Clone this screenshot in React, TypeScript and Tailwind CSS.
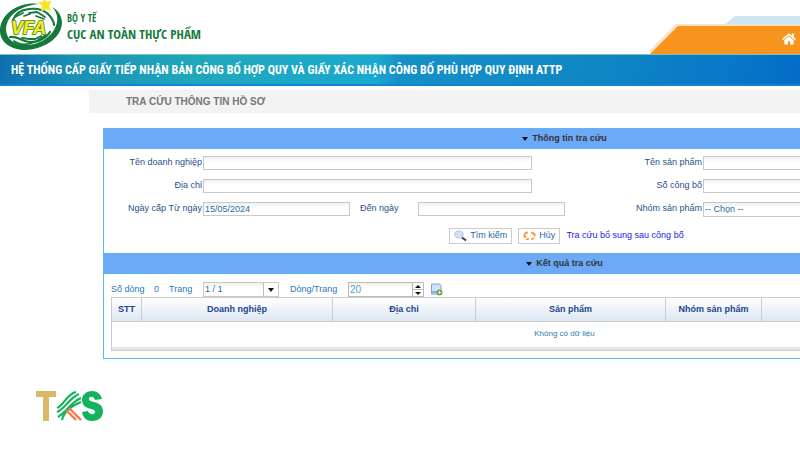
import type { ReactNode } from "react";
import { FaHome } from "react-icons/fa";

const inputClass =
    "border border-[#c9c9c9] bg-linear-to-b from-[#f0f0f0] to-white to-40% px-px text-[9px] text-[#1e6ba8] outline-none";

const buttonClass = "flex h-4 items-center gap-[3px] border border-[#ccc] px-1 text-[#1e6ba8]";

function VfaLogo() {
    return (
        <svg width="62" height="52" viewBox="0 0 62 52" aria-label="VFA">
            <path
                d="M40 4C22 1 2 11 0 29c-1 13 11 21 25 21 20-1 36-12 37-27 0-7-4-13-10-16 4 4 6 9 5 15-2 12-15 23-31 23C14 45 6 39 6 29 7 14 22 5 40 4Z"
                fill="#16793c"
            />
            <g fill="none" stroke="#16793c" strokeLinecap="round">
                <path d="M13 20c2-6 8-10 16-11 9-1 15 1 19 5 4 4 6 7 6 11" strokeWidth="2.2" />
                <path d="M15 17l8-4M29 13l8-1 8 5M24 16l6-2M36 16l8 3" strokeWidth="1.8" />
                <path d="M10 37c6-1 9 2 15 4 9 3 20-1 25-9" strokeWidth="2.2" />
                <path d="M14 41c5 4 13 4 21 1M22 38l7 1h6l6-3M38 40l8-5" strokeWidth="1.8" />
            </g>
            <path d="M44-1l3 3 5-1-3 5 2 5-5-2-5 3 1-6-4-4 5 0Z" fill="#f6e51f" />
            <text
                x="11"
                y="34"
                fontFamily="Liberation Sans, sans-serif"
                fontSize="18"
                fontWeight="700"
                fontStyle="italic"
                fill="#f8ea2a"
                stroke="#5f9a2c"
                strokeWidth="2"
                strokeLinejoin="round"
                paintOrder="stroke"
            >
                VFA
            </text>
        </svg>
    );
}

function TksLogo() {
    return (
        <svg width="68" height="32" viewBox="0 0 68 32" aria-label="TKS">
            <path d="M0 0h20v6h-7v24H7V6H0Z" fill="#d9b866" />
            <g fill="none" stroke="#12b35c" strokeWidth="2.2">
                <path d="M21 17C28 14 31 3 40 1M21 21C29 18 33 7 43 3M22 26C31 21 35 11 45 7M26 29C28 20 35 15 45 11" />
            </g>
            <path d="M33 17l12 12M30 19l10 10" fill="none" stroke="#fa7846" strokeWidth="2.4" />
            <path
                d="M66 8c-1-5-5-8-10-8-6 0-10 4-10 9 0 6 5 8 9 9 3 1 4 1 4 3 0 3-6 3-7-1l-6 1c1 6 5 9 10 9 7 0 11-4 11-10 0-5-4-8-9-9-3-1-5-1-5-3 0-3 5-3 6 1Z"
                fill="#12b35c"
            />
        </svg>
    );
}

function SearchIcon() {
    return (
        <svg width="13" height="12" viewBox="0 0 13 12">
            <path d="M8 7.500l4 3" stroke="#3b3b4a" strokeWidth="2" />
            <ellipse cx="5" cy="4.500" rx="4.200" ry="3.500" fill="#cfe0f8" stroke="#b4c6e6" />
        </svg>
    );
}

function RefreshIcon() {
    return (
        <svg width="13" height="10" viewBox="0 0 13 10" fill="none" stroke="#f3a045" strokeWidth="1.8">
            <path d="M5 1.500C2 1.500 1 3 1.500 5.500M3 8.200h3M8 1.500c3 0 4 2 3.500 4M8 8.200c1.500 0 2.500-.5 3-1.500" />
            <path d="M0 5h4L2 7.500ZM9 4h4l-2-2.500Z" fill="#f3a045" stroke="none" />
        </svg>
    );
}

function ExportIcon() {
    return (
        <svg width="13" height="13" viewBox="0 0 13 13">
            <path d="M1.500 1h8l1.500 1.500V11h-9.500Z" fill="#cfe3fa" stroke="#7ba4dc" />
            <path d="M2 8h8v2.500H2Z" fill="#8db5e8" />
            <circle cx="9.500" cy="9.500" r="3" fill="#6fa53c" />
            <path d="M8 9.500h3M9.500 8v3" stroke="#fff" />
        </svg>
    );
}

function PanelHeader({ children }: { children: ReactNode }) {
    return (
        <h2 className="flex h-[21px] items-center justify-center gap-1 border-y border-[#62b2fb] bg-[#6caaf7] text-[9px] font-bold text-[#333]">
            <svg width="6" height="4" viewBox="0 0 6 4">
                <path d="M0 0h6L3 4Z" fill="#111" />
            </svg>
            {children}
        </h2>
    );
}

function Field({ id, label, children }: { id: string; label: string; children: ReactNode }) {
    return (
        <div className="flex h-[15px] items-start">
            <label htmlFor={id} className="w-[99px] shrink-0 pr-px text-right text-[9px] leading-3 text-[#2c4f8c]">
                {label}
            </label>
            {children}
        </div>
    );
}

function Header() {
    return (
        <header className="flex h-[54px] justify-between">
            <div className="flex gap-[5px]">
                <VfaLogo />
                <div className="pt-[10px] font-['Open_Sans_Condensed','Lato',sans-serif] font-black text-[#157a3c]">
                    <p className="text-[10px] leading-4">BỘ Y TẾ</p>
                    <p className="text-[13px] leading-4">CỤC AN TOÀN THỰC PHẨM</p>
                </div>
            </div>
            <nav className="relative w-[150px]">
                <svg className="absolute inset-0" width="150" height="54" viewBox="0 0 150 54">
                    <path d="M74 25l11-9h65v9Z" fill="#cde6f3" />
                    <path d="M-2 52L26 24h124v3H29L1 54Z" fill="#fde3c4" />
                    <path d="M0 54L28 26h122v28Z" fill="#f7941e" />
                </svg>
                <a href="#" aria-label="Trang chủ" className="absolute right-1 bottom-2 text-white">
                    <FaHome size={14} />
                </a>
            </nav>
        </header>
    );
}

function SearchPanel() {
    return (
        <section className="border-x border-[#62b2fb]">
            <PanelHeader>Thông tin tra cứu</PanelHeader>
            <form className="pt-[7px] pb-[9px]">
                <div className="flex">
                    <div className="flex w-[500px] flex-col gap-2">
                        <Field id="company" label="Tên doanh nghiệp">
                            <input id="company" className={`${inputClass} h-[14px] w-[329px]`} />
                        </Field>
                        <Field id="address" label="Địa chỉ">
                            <input id="address" className={`${inputClass} h-[14px] w-[329px]`} />
                        </Field>
                        <Field id="from" label="Ngày cấp Từ ngày">
                            <input id="from" defaultValue="15/05/2024" className={`${inputClass} h-[14px] w-[147px] shrink-0`} />
                            <label htmlFor="to" className="w-[68px] shrink-0 pl-[10px] text-[9px] leading-3 text-[#2c4f8c]">
                                Đến ngày
                            </label>
                            <input id="to" className={`${inputClass} h-[14px] w-[147px] shrink-0`} />
                        </Field>
                    </div>
                    <div className="flex grow flex-col gap-2">
                        <Field id="product" label="Tên sản phẩm">
                            <input id="product" className={`${inputClass} h-[14px] w-[220px]`} />
                        </Field>
                        <Field id="number" label="Số công bố">
                            <input id="number" className={`${inputClass} h-[14px] w-[220px]`} />
                        </Field>
                        <Field id="group" label="Nhóm sản phẩm">
                            <select id="group" className={`${inputClass} h-[15px] w-[220px] appearance-none`}>
                                <option>-- Chọn --</option>
                            </select>
                        </Field>
                    </div>
                </div>
                <div className="mt-[11px] flex h-4 items-center justify-center gap-[6px] pl-1 text-[9px]">
                    <button type="button" className={buttonClass}>
                        <SearchIcon />
                        Tìm kiếm
                    </button>
                    <button type="button" className={buttonClass}>
                        <RefreshIcon />
                        Hủy
                    </button>
                    <a href="#" className="text-[#1a1aee]">
                        Tra cứu bổ sung sau công bố
                    </a>
                </div>
            </form>
        </section>
    );
}

function ResultPanel() {
    return (
        <section className="border-x border-b border-[#62b2fb]">
            <PanelHeader>Kết quả tra cứu</PanelHeader>
            <div className="px-[7px] pt-2 pb-[7px]">
                <div className="flex h-[15px] items-center text-[9px] text-[#2d7ab5]">
                    <span className="w-[43px]">Số dòng</span>
                    <span className="w-[15px]">0</span>
                    <label htmlFor="page" className="w-[34px]">
                        Trang
                    </label>
                    <div className="relative">
                        <select id="page" className={`${inputClass} block h-[15px] w-[76px] appearance-none`}>
                            <option>1 / 1</option>
                        </select>
                        <span className="pointer-events-none absolute inset-y-px right-px flex w-[15px] items-center justify-center border-l border-[#bbb] bg-white">
                            <svg width="6" height="4" viewBox="0 0 6 4">
                                <path d="M0 0h6L3 4Z" fill="#111" />
                            </svg>
                        </span>
                    </div>
                    <label htmlFor="rows" className="w-[69px] pl-[11px]">
                        Dòng/Trang
                    </label>
                    <div className="flex">
                        <input
                            id="rows"
                            defaultValue="20"
                            className="h-[15px] w-16 border border-r-0 border-[#bbb] bg-linear-to-b from-[#f0f0f0] to-white to-40% px-px text-[10px] text-[#5c9cc8]"
                        />
                        <div className="flex w-3 flex-col border border-[#bbb]">
                            <button type="button" aria-label="Tăng" className="flex grow items-center justify-center border-b border-[#bbb]">
                                <svg width="6" height="3" viewBox="0 0 6 3">
                                    <path d="M0 3h6L3 0Z" fill="#111" />
                                </svg>
                            </button>
                            <button type="button" aria-label="Giảm" className="flex grow items-center justify-center">
                                <svg width="6" height="3" viewBox="0 0 6 3">
                                    <path d="M0 0h6L3 3Z" fill="#111" />
                                </svg>
                            </button>
                        </div>
                    </div>
                    <button type="button" aria-label="Xuất" className="ml-[6px]">
                        <ExportIcon />
                    </button>
                </div>
                <table className="w-full table-fixed border-collapse border border-[#ccc]">
                    <colgroup>
                        <col className="w-[30px]" />
                        <col className="w-[191px]" />
                        <col className="w-[143px]" />
                        <col className="w-[190px]" />
                        <col className="w-[96px]" />
                        <col />
                    </colgroup>
                    <thead>
                        <tr className="h-6 bg-linear-to-b from-white to-[#dce6f2] text-[9px] text-[#1d4489]">
                            {["STT", "Doanh nghiệp", "Địa chỉ", "Sản phẩm", "Nhóm sản phẩm", ""].map((name) => (
                                <th key={name} className="border border-[#ccc] p-0">
                                    {name}
                                </th>
                            ))}
                        </tr>
                    </thead>
                    <tbody>
                        <tr className="h-[25px]">
                            <td colSpan={6} className="p-0 text-center text-[8px] text-[#2d7ab5]">
                                Không có dữ liệu
                            </td>
                        </tr>
                    </tbody>
                    <tfoot>
                        <tr className="h-1 bg-[#e6e6e6]">
                            <td colSpan={6} className="p-0"></td>
                        </tr>
                    </tfoot>
                </table>
            </div>
        </section>
    );
}

function App() {
    return (
        <div className="min-h-screen overflow-x-hidden bg-white font-['Liberation_Sans',Arial,sans-serif]">
            <Header />
            <div className="flex h-8 items-center border-t border-b-2 border-t-[#7cc8a8] border-b-[#1583cf] bg-[linear-gradient(100deg,#0f6eb0_0%,#1a90b5_9%,#1fa8bb_25%,#1aa9cf_47%,#1490c8_50%,#0f86c4_75%,#0878c8_90%,#046cc8_100%)] pl-[11px]">
                <h1 className="font-['Roboto_Condensed','Open_Sans_Condensed',sans-serif] text-[12px] font-bold whitespace-nowrap text-white">
                    HỆ THỐNG CẤP GIẤY TIẾP NHẬN BẢN CÔNG BỐ HỢP QUY VÀ GIẤY XÁC NHẬN CÔNG BỐ PHÙ HỢP QUY ĐỊNH ATTP
                </h1>
            </div>
            <main className="min-w-[1040px] pt-1 pl-[89px]">
                <p className="flex h-[23px] items-center bg-[#f3f3f3] pl-[37px] text-[10px] font-bold text-[#777]">TRA CỨU THÔNG TIN HỒ SƠ</p>
                <div className="mx-[14px] mt-[15px]">
                    <SearchPanel />
                    <ResultPanel />
                </div>
            </main>
            <footer className="mt-8 ml-9">
                <TksLogo />
            </footer>
        </div>
    );
}

export default App;
